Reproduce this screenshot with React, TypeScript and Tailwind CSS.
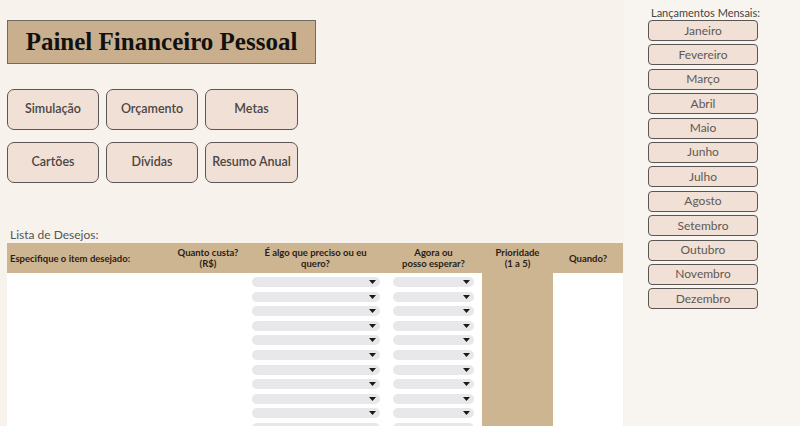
import React from 'react';

const sans = { fontFamily: 'Lato, "Open Sans", sans-serif' };

const navButtons = ['Simulação', 'Orçamento', 'Metas', 'Cartões', 'Dívidas', 'Resumo Anual'];

const months = [
  'Janeiro', 'Fevereiro', 'Março', 'Abril', 'Maio', 'Junho',
  'Julho', 'Agosto', 'Setembro', 'Outubro', 'Novembro', 'Dezembro',
];

const rows = Array.from({ length: 11 });

const Pill: React.FC<{ width: string }> = ({ width }) => (
  <div className={`${width} h-[10px] shrink-0 rounded-full bg-[#e8e7ea] flex items-center justify-end pr-[4px]`}>
    <svg width="7" height="4" viewBox="0 0 7 4">
      <path d="M0 0 L7 0 L3.5 4 Z" fill="#1a1a1a" />
    </svg>
  </div>
);

const App: React.FC = () => {
  return (
    <div className="w-[800px] h-[426px] overflow-hidden bg-[#f7f2ec] flex" style={sans}>
      {/* left: title, nav, wishlist */}
      <div className="w-[624px] pl-[7px] flex flex-col overflow-hidden">
        <div
          className="shrink-0 mt-[20px] w-[309px] h-[44px] bg-[#c9af8d] border border-[#6f6a64] flex items-center justify-center text-[25px] font-bold text-[#111]"
          style={{ fontFamily: '"Liberation Serif", serif' }}
        >
          Painel Financeiro Pessoal
        </div>

        <div className="shrink-0 mt-[25px] grid grid-cols-[92px_92px_93px] gap-x-[7px] gap-y-[12px]">
          {navButtons.map((b) => (
            <button
              key={b}
              className="h-[41px] rounded-[7px] bg-[#f1e0d6] border-[1.5px] border-[#5b5652] text-[12.5px] font-semibold text-[#4a4643]"
            >
              {b}
            </button>
          ))}
        </div>

        <div className="shrink-0 mt-[45px] pl-[3px] text-[12px] leading-[14px] text-[#555]">Lista de Desejos:</div>

        <div className="shrink-0 mt-[1px] w-[616px] grid grid-cols-[163px_76px_139px_97px_71px_70px] text-[9.5px] leading-[11px] font-bold text-[#2a2016]">
          <div className="h-[30px] bg-[#cdb592] flex items-center pl-[3px]">Especifique o item desejado:</div>
          <div className="h-[30px] bg-[#cdb592] flex items-center justify-center text-center">Quanto custa?<br />(R$)</div>
          <div className="h-[30px] bg-[#cdb592] flex items-center justify-center text-center">É algo que preciso ou eu<br />quero?</div>
          <div className="h-[30px] bg-[#cdb592] flex items-center justify-center text-center">Agora ou<br />posso esperar?</div>
          <div className="h-[30px] bg-[#cdb592] flex items-center justify-center text-center">Prioridade<br />(1 a 5)</div>
          <div className="h-[30px] bg-[#cdb592] flex items-center justify-center text-center">Quando?</div>

          <div className="col-span-2 h-[160px] bg-white" />
          <div className="h-[160px] bg-white pt-[4px] pl-[6px] flex flex-col gap-[4.6px] overflow-hidden">
            {rows.map((_, i) => (
              <Pill key={i} width="w-[128px]" />
            ))}
          </div>
          <div className="h-[160px] bg-white pt-[4px] pl-[8px] flex flex-col gap-[4.6px] overflow-hidden">
            {rows.map((_, i) => (
              <Pill key={i} width="w-[81px]" />
            ))}
          </div>
          <div className="h-[160px] bg-[#cdb592]" />
          <div className="h-[160px] bg-white" />
        </div>
      </div>

      {/* right: monthly entries */}
      <div className="flex-1 bg-[#f8f4ef] pl-[24px] flex flex-col">
        <div className="mt-[6px] pl-[3px] text-[11px] leading-[13px] text-[#444]">Lançamentos Mensais:</div>
        <div className="mt-[1px] flex flex-col gap-[3.4px]">
          {months.map((m) => (
            <button
              key={m}
              className="w-[110px] h-[21px] shrink-0 rounded-[4px] bg-[#f1e0d6] border-[1.5px] border-[#5b5652] text-[12px] text-[#5e5955] flex items-center justify-center"
            >
              {m}
            </button>
          ))}
        </div>
      </div>
    </div>
  );
};

export default App;
